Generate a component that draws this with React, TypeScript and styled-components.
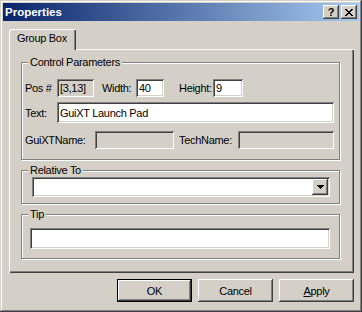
import React from "react";
import styled, { createGlobalStyle } from "styled-components";

const GlobalStyle = createGlobalStyle`
  html, body { margin: 0; padding: 0; background: #d4d0c8; }
  #root { width: 362px; height: 312px; }
`;

const raised = `box-shadow: inset -1px -1px #404040, inset 1px 1px #ffffff, inset -2px -2px #808080, inset 2px 2px #d4d0c8;`;
const sunken = `box-shadow: inset 1px 1px #808080, inset -1px -1px #ffffff, inset 2px 2px #404040, inset -2px -2px #d4d0c8;`;

const Window = styled.div`
  box-sizing: border-box;
  width: 362px;
  height: 312px;
  background: #d4d0c8;
  box-shadow: inset -1px -1px #404040, inset 1px 1px #d4d0c8, inset -2px -2px #808080, inset 2px 2px #ffffff;
  padding: 3px;
  display: flex;
  flex-direction: column;
  font-family: "Liberation Sans", Arial, sans-serif;
  font-size: 11px;
  letter-spacing: -0.3px;
  color: #000;
`;

const TitleBar = styled.div`
  flex: none;
  height: 18px;
  display: flex;
  align-items: center;
  gap: 2px;
  padding: 0 2px 0 2px;
  background: linear-gradient(to right, #0a246a, #a6caf0);
`;

const Title = styled.div`
  flex: 1;
  color: #fff;
  font-weight: bold;
  font-size: 11.5px;
  letter-spacing: 0;
  line-height: 18px;
`;

const CaptionButton = styled.div`
  box-sizing: border-box;
  width: 16px;
  height: 14px;
  background: #d4d0c8;
  ${raised}
  display: flex;
  align-items: center;
  justify-content: center;
  font-weight: bold;
  font-size: 11px;
  letter-spacing: 0;
  line-height: 14px;
`;

const Body = styled.div`
  flex: 1;
  display: flex;
  flex-direction: column;
  padding: 8px 5px 0 6px;
`;

const TabStrip = styled.div`
  flex: none;
  height: 20px;
  display: flex;
  align-items: flex-start;
`;

const Tab = styled.div`
  position: relative;
  z-index: 1;
  box-sizing: border-box;
  width: 67px;
  height: 21px;
  padding: 3px 0 0 8px;
  line-height: 13px;
  background: #d4d0c8;
  border-top-left-radius: 2px;
  box-shadow: inset 1px 1px #ffffff, inset -1px 0 #404040, inset -2px 0 #808080;
`;

const Panel = styled.div`
  flex: none;
  box-sizing: border-box;
  height: 224px;
  padding: 7px 14px 0 12px;
  display: flex;
  flex-direction: column;
  box-shadow: inset 1px 1px #ffffff, inset -1px -1px #404040, inset -2px -2px #808080;
`;

const Group = styled.fieldset<{ $mt?: number }>`
  margin: ${(p) => p.$mt ?? 0}px 0 0 0;
  padding: 0;
  min-width: 0;
  border: 1px solid #808080;
  box-shadow: inset 1px 1px #ffffff, 1px 1px #ffffff;
`;

const Legend = styled.legend`
  margin-left: 6px;
  padding: 0 2px;
  line-height: 13px;
  background: #d4d0c8;
`;

const GroupBody = styled.div<{ $pad: string }>`
  padding: ${(p) => p.$pad};
  display: flex;
  flex-direction: column;
`;

const Row = styled.div<{ $h: number; $mt?: number }>`
  display: flex;
  align-items: center;
  height: ${(p) => p.$h}px;
  margin-top: ${(p) => p.$mt ?? 0}px;
`;

const Label = styled.span<{ $w: number; $ml?: number }>`
  flex: none;
  width: ${(p) => p.$w}px;
  margin-left: ${(p) => p.$ml ?? 0}px;
  white-space: nowrap;
`;

const Field = styled.input<{ $w?: number; $h?: number; $grey?: boolean }>`
  box-sizing: border-box;
  flex: ${(p) => (p.$w ? "none" : "1")};
  width: ${(p) => (p.$w ? `${p.$w}px` : "auto")};
  min-width: 0;
  height: ${(p) => p.$h ?? 18}px;
  margin: 0;
  border: none;
  outline: none;
  padding: 0 3px;
  background: ${(p) => (p.$grey ? "#d4d0c8" : "#ffffff")};
  ${sunken}
  font-family: inherit;
  font-size: 11px;
  letter-spacing: -0.3px;
  color: #000;
`;

const Combo = styled.div`
  box-sizing: border-box;
  height: 20px;
  display: flex;
  justify-content: flex-end;
  align-items: stretch;
  padding: 2px;
  background: #ffffff;
  ${sunken}
`;

const DropButton = styled.div`
  box-sizing: border-box;
  width: 16px;
  background: #d4d0c8;
  ${raised}
  display: flex;
  align-items: center;
  justify-content: center;
`;

const ButtonRow = styled.div`
  flex: none;
  display: flex;
  justify-content: flex-end;
  gap: 6px;
  margin-top: 6px;
`;

const Button = styled.button<{ $default?: boolean }>`
  box-sizing: border-box;
  width: 75px;
  height: 23px;
  margin: 0;
  padding: 0;
  border: none;
  background: #d4d0c8;
  font-family: inherit;
  font-size: 11px;
  letter-spacing: -0.3px;
  color: #000;
  ${(p) =>
    p.$default
      ? `box-shadow: inset 0 0 0 1px #000000, inset -2px -2px #404040, inset 2px 2px #ffffff, inset -3px -3px #808080, inset 3px 3px #d4d0c8;`
      : raised}
`;

const CloseGlyph = () => (
  <svg width="8" height="7" viewBox="0 0 8 7" shapeRendering="crispEdges">
    {Array.from({ length: 7 }).map((_, i) => (
      <g key={i} fill="#000">
        <rect x={i} y={i} width={2} height={1} />
        <rect x={6 - i} y={i} width={2} height={1} />
      </g>
    ))}
  </svg>
);

const DownArrow = () => (
  <svg width="7" height="4" viewBox="0 0 7 4" shapeRendering="crispEdges">
    <rect x="0" y="0" width="7" height="1" fill="#000" />
    <rect x="1" y="1" width="5" height="1" fill="#000" />
    <rect x="2" y="2" width="3" height="1" fill="#000" />
    <rect x="3" y="3" width="1" height="1" fill="#000" />
  </svg>
);

export default function App() {
  return (
    <>
      <GlobalStyle />
      <Window>
        <TitleBar>
          <Title>Properties</Title>
          <CaptionButton>?</CaptionButton>
          <CaptionButton>
            <CloseGlyph />
          </CaptionButton>
        </TitleBar>
        <Body>
          <TabStrip>
            <Tab>Group Box</Tab>
          </TabStrip>
          <Panel>
            <Group>
              <Legend>Control Parameters</Legend>
              <GroupBody $pad="10px 5px 10px 3px">
                <Row $h={18}>
                  <Label $w={32}>Pos #</Label>
                  <Field $w={37} $grey readOnly defaultValue="[3,13]" />
                  <Label $w={34} $ml={8}>Width:</Label>
                  <Field $w={28} defaultValue="40" />
                  <Label $w={34} $ml={15}>Height:</Label>
                  <Field $w={30} defaultValue="9" />
                </Row>
                <Row $h={21} $mt={5}>
                  <Label $w={32}>Text:</Label>
                  <Field $h={21} defaultValue="GuiXT Launch Pad" />
                </Row>
                <Row $h={18} $mt={8}>
                  <Label $w={70}>GuiXTName:</Label>
                  <Field $w={79} $grey readOnly defaultValue="" />
                  <Label $w={59} $ml={5}>TechName:</Label>
                  <Field $grey readOnly defaultValue="" />
                </Row>
              </GroupBody>
            </Group>
            <Group $mt={4}>
              <Legend>Relative To</Legend>
              <GroupBody $pad="0 9px 6px 10px">
                <Combo>
                  <DropButton>
                    <DownArrow />
                  </DropButton>
                </Combo>
              </GroupBody>
            </Group>
            <Group $mt={4}>
              <Legend>Tip</Legend>
              <GroupBody $pad="7px 9px 9px 8px">
                <Row $h={21}>
                  <Field $h={21} defaultValue="" />
                </Row>
              </GroupBody>
            </Group>
          </Panel>
          <ButtonRow>
            <Button $default>OK</Button>
            <Button>Cancel</Button>
            <Button>
              <u>A</u>pply
            </Button>
          </ButtonRow>
        </Body>
      </Window>
    </>
  );
}
